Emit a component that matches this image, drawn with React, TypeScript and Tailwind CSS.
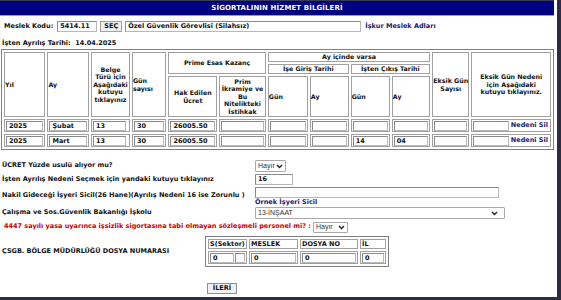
import React from 'react';

type Cell = { v?: string; w?: string };

const rows: { cells: Cell[] }[] = [
  {
    cells: [
      { v: '2025' }, { v: 'Şubat' }, { v: '13', w: 'w-[33px]' }, { v: '30' }, { v: '26005.50' }, { v: '' },
      { v: '' }, { v: '' }, { v: '' }, { v: '' }, { v: '' },
    ],
  },
  {
    cells: [
      { v: '2025' }, { v: 'Mart' }, { v: '13', w: 'w-[33px]' }, { v: '30' }, { v: '26005.50' }, { v: '' },
      { v: '' }, { v: '' }, { v: '14' }, { v: '04' }, { v: '' },
    ],
  },
];

const colWidths = [
  'w-[42px]', 'w-[42px]', 'w-[39px]', 'w-[35px]', 'w-[49px]', 'w-[47px]',
  'w-[41px]', 'w-[40px]', 'w-[40px]', 'w-[39px]', 'w-[38px]', 'w-[80px]',
];

const Chevron = () => (
  <svg width="7" height="5" viewBox="0 0 7 5" className="shrink-0">
    <path d="M1 1 L3.5 3.5 L6 1" fill="none" stroke="#222" strokeWidth="1.4" />
  </svg>
);

const FakeSelect: React.FC<{ text: string; className: string }> = ({ text, className }) => (
  <div
    className={`flex items-center justify-between border border-[#a9a9a9] rounded-[1px] bg-white px-[2px] font-['Liberation_Sans',Arial,sans-serif] font-normal text-[7px] text-[#333] ${className}`}
  >
    <span>{text}</span>
    <Chevron />
  </div>
);

const Field: React.FC<{ v?: string; className?: string; h?: string }> = ({ v, className, h }) => (
  <div className={`${h ?? 'h-[11px] leading-[9px]'} border border-[#b8b8b8] border-t-[#8a8a8a] border-l-[#8a8a8a] bg-white px-[2px] ${className ?? 'w-full'}`}>
    {v}
  </div>
);

const th = 'border border-[#a0a0a0] leading-[7.5px] px-0 font-bold text-[6.3px]';
const td = 'border border-[#a0a0a0] px-px pt-px pb-0';
const small = 'h-[10px] leading-[8px]';

const App: React.FC = () => {
  return (
    <div className="w-[561px] h-[300px] overflow-hidden bg-white">
      <div className="h-[300px] border-r-[4px] border-b-[3px] border-[#2c2c44] pr-[3px] font-['DejaVu_Sans',Verdana,sans-serif] font-bold text-[6.5px] text-[#111]">
        {/* başlık */}
        <div className="h-[16px] border-t border-[#3a3a5a] bg-[#000080] border-b border-b-[#9a9ab8] flex items-center justify-center text-white text-[7px] tracking-[0.1px]">
          SİGORTALININ HİZMET BİLGİLERİ
        </div>

        <div className="flex items-center h-[11px] mt-[5px] pl-[4px] gap-[3px]">
          <span>Meslek Kodu:</span>
          <Field v="5414.11" className="w-[40px] ml-[1px]" />
          <div className="h-[11px] w-[22px] border border-[#a0a0a0] bg-[#eeeeee] flex items-center justify-center">SEÇ</div>
          <Field v="Özel Güvenlik Görevlisi (Silahsız)" className="w-[236px]" />
          <span className="text-[#1a1a70] ml-[1px]">İşkur Meslek Adları</span>
        </div>

        <div className="pl-[2px] mt-[7px] h-[9px] leading-[9px]">
          İşten Ayrılış Tarihi:&nbsp; 14.04.2025
        </div>

        <table className="mt-[1px] ml-px table-fixed border-separate border-spacing-[2px] border border-[#808080]">
          <colgroup>
            {colWidths.map((w, i) => (
              <col key={i} className={w} />
            ))}
          </colgroup>
          <thead>
            <tr className="h-[10px]">
              <th rowSpan={3} className={`${th} text-left`}>Yıl</th>
              <th rowSpan={3} className={`${th} text-left`}>Ay</th>
              <th rowSpan={3} className={`${th} text-center`}>Belge Türü için Aşağıdaki kutuyu tıklayınız</th>
              <th rowSpan={3} className={`${th} text-left`}>Gün sayısı</th>
              <th rowSpan={2} colSpan={2} className={`${th} text-center`}>Prime Esas Kazanç</th>
              <th colSpan={4} className={`${th} text-center`}>Ay içinde varsa</th>
              <th rowSpan={3} className={`${th} text-center`}>Eksik Gün Sayısı</th>
              <th rowSpan={3} className={`${th} text-center px-[6px]`}>Eksik Gün Nedeni için Aşağıdaki kutuyu tıklayınız.</th>
            </tr>
            <tr className="h-[10px]">
              <th colSpan={2} className={`${th} text-center`}>İşe Giriş Tarihi</th>
              <th colSpan={2} className={`${th} text-center`}>İşten Çıkış Tarihi</th>
            </tr>
            <tr className="h-[41px]">
              <th className={`${th} text-center`}>Hak Edilen Ücret</th>
              <th className={`${th} text-center`}>Prim İkramiye ve Bu Nitelikteki İstihkak</th>
              <th className={`${th} text-left`}>Gün</th>
              <th className={`${th} text-left`}>Ay</th>
              <th className={`${th} text-left`}>Gün</th>
              <th className={`${th} text-left`}>Ay</th>
            </tr>
          </thead>
          <tbody>
            {rows.map((r, ri) => (
              <tr key={ri}>
                {r.cells.map((c, ci) => (
                  <td key={ci} className={td}>
                    <Field v={c.v} className={c.w} h={small} />
                  </td>
                ))}
                <td className={td}>
                  <div className="flex items-center justify-between">
                    <Field className="w-[36px]" h={small} />
                    <span className="text-[#1a1a70] pr-[1px]">Nedeni Sil</span>
                  </div>
                </td>
              </tr>
            ))}
          </tbody>
        </table>

        {/* form alanları */}
        <div className="mt-[10px] flex flex-col gap-[2px]">
          <div className="flex items-center h-[12px]">
            <span className="w-[255px] pl-[2px]">ÜCRET Yüzde usulü alıyor mu?</span>
            <FakeSelect text="Hayır" className="w-[31px] h-[12px]" />
          </div>
          <div className="flex items-center h-[11px]">
            <span className="w-[255px] pl-[2px]">İşten Ayrılış Nedeni Seçmek için yandaki kutuyu tıklayınız</span>
            <Field v="16" className="w-[38px]" />
          </div>
          <div className="flex items-center h-[18px]">
            <span className="w-[255px] pl-[2px]">Nakil Gideceği İşyeri Sicil(26 Hane)(Ayrılış Nedeni 16 ise Zorunlu )</span>
            <div className="flex flex-col">
              <Field className="w-[244px]" />
              <span className="text-[#1a1a70] leading-[7px] mt-px">Örnek İşyeri Sicil</span>
            </div>
          </div>
          <div className="flex items-center h-[12px]">
            <span className="w-[255px] pl-[2px]">Çalışma ve Sos.Güvenlik Bakanlığı İşkolu</span>
            <FakeSelect text="13-İNŞAAT" className="w-[250px] h-[12px] pr-[6px]" />
          </div>
          <div className="flex items-center h-[12px] pl-[4px] text-[#c80000]">
            <span>4447 sayılı yasa uyarınca işsizlik sigortasına tabi olmayan sözleşmeli personel mi? :</span>
            <FakeSelect text="Hayır" className="w-[35px] h-[11px] ml-[2px]" />
          </div>
          <div className="flex items-center mt-px">
            <span className="w-[205px] pl-[2px]">ÇSGB. BÖLGE MÜDÜRLÜĞÜ DOSYA NUMARASI</span>
            <table className="border-separate border-spacing-[2px] border border-[#808080] table-fixed">
              <colgroup>
                <col className="w-[37px]" />
                <col className="w-[49px]" />
                <col className="w-[58px]" />
                <col className="w-[26px]" />
              </colgroup>
              <thead>
                <tr className="h-[10px]">
                  {['S(Sektor)', 'MESLEK', 'DOSYA NO', 'İL'].map((h) => (
                    <th key={h} className="border border-[#a0a0a0] text-left px-px leading-[7px]">{h}</th>
                  ))}
                </tr>
              </thead>
              <tbody>
                <tr>
                  <td className={td}>
                    <div className="flex gap-[1px]">
                      <Field v="0" className="w-[24px]" h={small} />
                      <Field className="w-[10px]" h={small} />
                    </div>
                  </td>
                  <td className={td}><Field v="0" h={small} /></td>
                  <td className={td}><Field v="0" h={small} /></td>
                  <td className={td}><Field v="0" h={small} /></td>
                </tr>
              </tbody>
            </table>
          </div>
          <div className="mt-[14px] pl-[207px]">
            <div className="w-[30px] h-[11px] border border-[#909090] bg-[#f0f0f0] flex items-center justify-center">İLERİ</div>
          </div>
        </div>
      </div>
    </div>
  );
};

export default App;
